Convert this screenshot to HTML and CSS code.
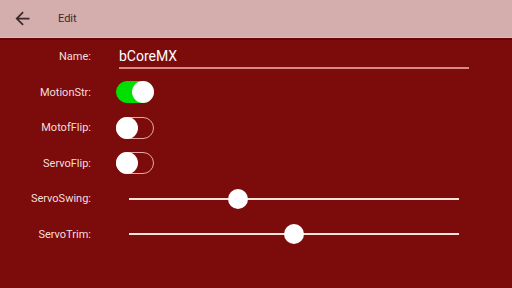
FILE: index.html
```html
<!DOCTYPE html>
<html lang="en">
<head>
  <meta charset="UTF-8" />
  <meta name="viewport" content="width=device-width, initial-scale=1.0" />
  <title>Edit</title>
  <link rel="stylesheet" href="styles.css">
</head>
<body>
  <header class="toolbar">
    <button class="back" title="Back">
      <svg viewBox="0 0 24 24" width="21" height="21"><path d="M20 11H7.83l5.59-5.59L12 4l-8 8 8 8 1.41-1.41L7.83 13H20v-2z" fill="#3a2a2a"/></svg>
    </button>
    <div class="title">Edit</div>
  </header>

  <main class="form">
    <label class="label" for="name">Name:</label>
    <div class="field"><input id="name" class="text-input" type="text" value="bCoreMX" /></div>

    <div class="label">MotionStr:</div>
    <div class="field"><div class="toggle on"><span class="knob"></span></div></div>

    <div class="label">MotofFlip:</div>
    <div class="field"><div class="toggle"><span class="knob"></span></div></div>

    <div class="label">ServoFlip:</div>
    <div class="field"><div class="toggle"><span class="knob"></span></div></div>

    <div class="label">ServoSwing:</div>
    <div class="field">
      <div class="slider"><div class="track"><span class="thumb" style="left:33%"></span></div></div>
    </div>

    <div class="label">ServoTrim:</div>
    <div class="field">
      <div class="slider"><div class="track"><span class="thumb" style="left:50%"></span></div></div>
    </div>
  </main>
</body>
</html>
```

FILE: styles.css
```css
:root {
  --bg: #7c0b0b;
  --bar: #d4adad;
  --label: #f3dede;
  --line: #d98888;
  --green: #00e000;
}

html, body {
  height: 100%;
}

body {
  margin: 0;
  background: var(--bg);
  font-family: Roboto, "Liberation Sans", sans-serif;
  overflow: hidden;
}

.toolbar {
  height: 37px;
  background: var(--bar);
  border-bottom: 1px solid #dcbaba;
  box-shadow: 0 2px 0 #6a0505;
  display: flex;
  align-items: center;
}

.back {
  background: none;
  border: none;
  padding: 0;
  margin-left: 12px;
  width: 21px;
  height: 21px;
  display: flex;
}

.title {
  margin-left: 25px;
  font-size: 11px;
  color: #3a2a2a;
}

.form {
  display: grid;
  grid-template-columns: 91px 353px;
  grid-auto-rows: 35.5px;
  column-gap: 25px;
  padding-top: 1px;
  align-items: center;
}

.label {
  text-align: right;
  font-size: 11px;
  color: var(--label);
}

.field {
  display: flex;
  align-items: center;
}

.text-input {
  margin-left: 3px;
  width: 350px;
  height: 24px;
  box-sizing: border-box;
  padding: 0;
  background: transparent;
  border: none;
  border-bottom: 2px solid var(--line);
  color: #fff;
  font-family: inherit;
  font-size: 14px;
  outline: none;
}

.toggle {
  position: relative;
  width: 38px;
  height: 22px;
  box-sizing: border-box;
  border: 1px solid #eaa6a6;
  border-radius: 11px;
}

.toggle .knob {
  position: absolute;
  top: -1px;
  left: -1px;
  width: 22px;
  height: 22px;
  border-radius: 50%;
  background: #fff;
}

.toggle.on {
  background: var(--green);
  border-color: var(--green);
}

.toggle.on .knob {
  left: auto;
  right: -1px;
  background: radial-gradient(circle at 50% 45%, #fff 55%, #e4e4e4);
}

.slider {
  margin-left: 3px;
  width: 350px;
  padding: 0 10px;
  box-sizing: border-box;
}

.track {
  position: relative;
  height: 2px;
  background: #f5e4da;
}

.thumb {
  position: absolute;
  top: 1px;
  width: 20px;
  height: 20px;
  margin: -10px 0 0 -10px;
  border-radius: 50%;
  background: #fff;
}
```
